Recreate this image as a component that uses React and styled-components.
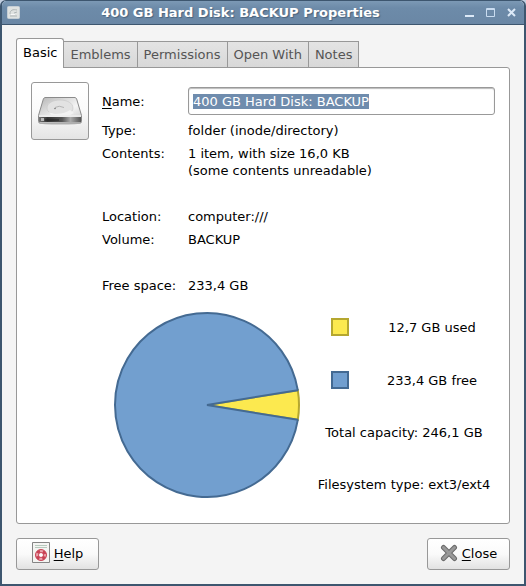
import React, { useEffect, useRef } from 'react'
import styled, { createGlobalStyle } from 'styled-components'

const theme = {
    frame: '#3d566f',
    title: '#6d8ba9',
    border: '#989898',
    selection: '#6f8cad',
    used: '#fce94f',
    usedBorder: '#b5a72f',
    free: '#729fcf',
    freeBorder: '#446a92',
}

const tabs = ['Basic', 'Emblems', 'Permissions', 'Open With', 'Notes']

const disk = { used: 12.7, free: 233.4 }

const DriveIcon = () => (
    <svg width="46" height="32" viewBox="0 0 46 32" aria-hidden="true">
        <defs>
            <linearGradient id="driveTop" x1="0" y1="0" x2="1" y2="1">
                <stop offset="0" stopColor="#b4b4b4" />
                <stop offset="0.3" stopColor="#d6d6d6" />
                <stop offset="0.6" stopColor="#f4f4f4" />
                <stop offset="1" stopColor="#c4c4c4" />
            </linearGradient>
            <linearGradient id="driveFront" x1="0" y1="0" x2="1" y2="0">
                <stop offset="0" stopColor="#777" />
                <stop offset="0.2" stopColor="#333" />
                <stop offset="0.55" stopColor="#555" />
                <stop offset="0.75" stopColor="#aaa" />
                <stop offset="1" stopColor="#555" />
            </linearGradient>
        </defs>
        <ellipse cx="23" cy="28" rx="21" ry="2" fill="#d0d0d0" />
        <path d="M8 2.500h30l1.500 1 5 17v6q0 1.500-1.500 1.500h-40q-1.500 0-1.500-1.500v-6l5-17z" fill="url(#driveTop)" stroke="#8a8a8a" />
        <path d="M2 22h42v5H2z" fill="url(#driveFront)" />
        <path d="M2 21h42" stroke="#eee" strokeWidth="1.500" />
        <path d="M10 13c0-5 6-8 13-8s13 3 13 8-6 6.500-13 6.500S10 18 10 13z" fill="#e2e2e2" stroke="#c8c8c8" strokeWidth=".7" />
        <path d="M12 17c6 3 16 2 21-2l4 3-4 2H14z" fill="#f2f2f2" />
        <path d="M18 12.500q4-2.500 9 0" fill="none" stroke="#b4b4b4" />
        <circle cx="18" cy="13.500" r=".8" fill="#777" />
        <path d="M4 23h3v3H4z" fill="#b8b8b8" />
        <path d="M8 25h14" stroke="#222" />
    </svg>
)

const WindowIcon = () => (
    <svg width="13" height="13" viewBox="0 0 13 13" aria-hidden="true">
        <rect x=".5" y=".5" width="12" height="12" rx="1" fill="#dfe2e1" stroke="#c5ced5" />
        <path d="M3 8c0-4 3-5 7-4M3 10h7M7 7l3-1" fill="none" stroke="#aeb5b6" />
        <path d="M4 8.500h4" stroke="#f7f7f7" />
    </svg>
)

const HelpIcon = () => (
    <svg width="18" height="22" viewBox="0 0 18 22" aria-hidden="true">
        <path d="M.5.5h17v20H.5z" fill="#f4f4f2" stroke="#858585" />
        <path d="M3 3.500h12M3 5.500h12" stroke="#b7c9bd" />
        <circle cx="9" cy="13" r="4" fill="#fff" stroke="#e9a5ad" strokeWidth="3" />
        <circle cx="9" cy="13" r="5.500" fill="none" stroke="#c94355" />
        <circle cx="9" cy="13" r="2.500" fill="none" stroke="#c94355" />
        <circle cx="9" cy="13" r="4" fill="none" stroke="#c94355" strokeWidth="3" strokeDasharray="3.140" strokeDashoffset="-1.570" />
    </svg>
)

const CloseIcon = () => (
    <svg width="18" height="18" viewBox="0 0 18 18" aria-hidden="true">
        <path d="M3.500 3.500l11 11M14.500 3.500l-11 11" stroke="#6a6a6a" strokeWidth="5" strokeLinecap="round" />
        <path d="M3.500 3.500l11 11M14.500 3.500l-11 11" stroke="#999" strokeWidth="3" strokeLinecap="round" />
    </svg>
)

const MinimizeIcon = () => (
    <svg width="11" height="11" viewBox="0 0 11 11" aria-hidden="true">
        <path d="M1 9h9" stroke="#dce9f7" strokeWidth="2" />
    </svg>
)

const MaximizeIcon = () => (
    <svg width="11" height="11" viewBox="0 0 11 11" aria-hidden="true">
        <path d="M1.500 1.500h8v8h-8zM1 2.500h9" fill="none" stroke="#c9dcf0" />
    </svg>
)

const CloseWindowIcon = () => (
    <svg width="11" height="11" viewBox="0 0 11 11" aria-hidden="true">
        <path d="M2 2l7 7M9 2l-7 7" stroke="#dce9f7" strokeWidth="2" />
    </svg>
)

// the used slice is centred on the right side of the pie
const PieChart = ({ used, free }) => {
    const r = 92
    const c = 94
    const angle = (used / (used + free)) * Math.PI
    const x = c + r * Math.cos(angle)
    const top = c - r * Math.sin(angle)
    const bottom = c + r * Math.sin(angle)

    return (
        <Pie viewBox="0 0 188 188" role="img" aria-label="Disk usage">
            <path d={`M${c} ${c}L${x} ${top}A${r} ${r} 0 0 1 ${x} ${bottom}Z`} fill={theme.used} stroke={theme.usedBorder} strokeWidth="2" />
            <path d={`M${c} ${c}L${x} ${bottom}A${r} ${r} 0 1 1 ${x} ${top}Z`} fill={theme.free} stroke={theme.freeBorder} strokeWidth="2" strokeLinejoin="bevel" />
        </Pie>
    )
}

const App = () => {
    const nameInput = useRef(null)

    useEffect(() => {
        nameInput.current.focus()
        nameInput.current.select()
    }, [])

    return (
        <>
            <GlobalStyle />
            <Window>
                <TitleBar>
                    <WindowIcon />
                    <Title>400 GB Hard Disk: BACKUP Properties</Title>
                    <WindowButton aria-label="Minimize"><MinimizeIcon /></WindowButton>
                    <WindowButton aria-label="Maximize"><MaximizeIcon /></WindowButton>
                    <WindowButton aria-label="Close window"><CloseWindowIcon /></WindowButton>
                </TitleBar>

                <Content>
                    <TabList role="tablist">
                        {tabs.map((tab, key) => (
                            <Tab key={tab} role="tab" aria-selected={key === 0} $active={key === 0}>{tab}</Tab>
                        ))}
                    </TabList>

                    <Panel role="tabpanel">
                        <IconButton aria-label="Change icon"><DriveIcon /></IconButton>
                        <Details>
                            <NameRow>
                                <label htmlFor="name"><u>N</u>ame:</label>
                                <NameInput id="name" ref={nameInput} defaultValue="400 GB Hard Disk: BACKUP" spellCheck="false" />
                            </NameRow>
                            <Properties>
                                <Property><dt>Type:</dt><dd>folder (inode/directory)</dd></Property>
                                <Property $last><dt>Contents:</dt><dd>1 item, with size 16,0 KB<br />(some contents unreadable)</dd></Property>
                                <Property><dt>Location:</dt><dd>computer:///</dd></Property>
                                <Property $last><dt>Volume:</dt><dd>BACKUP</dd></Property>
                                <Property><dt>Free space:</dt><dd>233,4 GB</dd></Property>
                            </Properties>
                            <Usage>
                                <PieChart used={disk.used} free={disk.free} />
                                <Legend>
                                    <LegendItem>
                                        <Swatch $fill={theme.used} $border={theme.usedBorder} />
                                        <LegendText>12,7 GB used</LegendText>
                                    </LegendItem>
                                    <LegendItem>
                                        <Swatch $fill={theme.free} $border={theme.freeBorder} />
                                        <LegendText>233,4 GB free</LegendText>
                                    </LegendItem>
                                    <LegendLine>Total capacity: 246,1 GB</LegendLine>
                                    <LegendLine>Filesystem type: ext3/ext4</LegendLine>
                                </Legend>
                            </Usage>
                        </Details>
                    </Panel>

                    <Actions>
                        <ActionButton><HelpIcon /><span><u>H</u>elp</span></ActionButton>
                        <ActionButton><CloseIcon /><span><u>C</u>lose</span></ActionButton>
                    </Actions>
                </Content>
            </Window>
        </>
    )
}

const GlobalStyle = createGlobalStyle`
    * {
        box-sizing: border-box;
    }

    body {
        margin: 0;
        background: #c3cfe0;
        color: #000;
        font: 13px/17px "DejaVu Sans", sans-serif;
    }

    button, input {
        font: inherit;
        color: inherit;
    }

    u {
        text-underline-offset: 2px;
    }
`

const Window = styled.main`
    display: flex;
    flex-direction: column;
    min-height: 100vh;
    border: 2px solid ${theme.frame};
    border-top-width: 1px;
    border-radius: 6px 6px 0 0;
    background: #f4f4f4;
    overflow: hidden;
`

const TitleBar = styled.header`
    display: flex;
    align-items: center;
    gap: 4px;
    height: 24px;
    padding: 0 4px 0 5px;
    border-bottom: 1px solid ${theme.frame};
    background: linear-gradient(#7c99b5, ${theme.title} 30%, #6a87a5);
`

const Title = styled.h1`
    flex: 1;
    margin: 0;
    color: white;
    font-size: 13px;
    text-align: center;
    text-shadow: 1px 1px 1px #49637d;
`

const WindowButton = styled.button`
    display: flex;
    align-items: center;
    justify-content: center;
    width: 17px;
    height: 17px;
    padding: 0;
    border: 0;
    background: none;
`

const Content = styled.div`
    display: flex;
    flex: 1;
    flex-direction: column;
    padding: 13px 14px 14px;
`

const TabList = styled.div`
    display: flex;
    align-items: flex-end;
`

const Tab = styled.button`
    height: ${({ $active }) => ($active ? 30 : 26)}px;
    margin-bottom: ${({ $active }) => ($active ? -1 : 0)}px;
    margin-right: -1px;
    padding: ${({ $active }) => ($active ? '0 6px 2px' : '0 6px')};
    border: 1px solid ${theme.border};
    border-bottom: 0;
    border-radius: ${({ $active }) => ($active ? '3px 3px 0 0' : 0)};
    background: ${({ $active }) => ($active ? 'white' : 'linear-gradient(#e4e4e4, #d8d8d8)')};
    color: ${({ $active }) => ($active ? '#000' : '#555')};
    z-index: ${({ $active }) => ($active ? 1 : 0)};
`

const Panel = styled.section`
    display: flex;
    flex: 1;
    align-items: flex-start;
    gap: 13px;
    padding: 14px;
    border: 1px solid ${theme.border};
    border-radius: 0 3px 3px 3px;
    background: white;
`

const IconButton = styled.button`
    display: flex;
    align-items: center;
    justify-content: center;
    width: 58px;
    height: 58px;
    padding: 0;
    border: 1px solid ${theme.border};
    border-radius: 3px;
    background: linear-gradient(#fff, #fafafa 50%, #e4e4e4);
`

const Details = styled.div`
    flex: 1;
    padding-top: 5px;
`

const NameRow = styled.div`
    display: grid;
    grid-template-columns: 86px 1fr;
    align-items: center;
`

const NameInput = styled.input`
    width: 100%;
    height: 28px;
    padding: 0 4px;
    border: 1px solid #999;
    border-radius: 3px;
    outline: 0;
    background: white;
    box-shadow: inset 0 1px 1px #bbb;

    &::selection {
        background: ${theme.selection};
        color: white;
    }
`

const Properties = styled.dl`
    margin: 7px 0 0;
`

const Property = styled.div`
    display: grid;
    grid-template-columns: 86px 1fr;
    margin-bottom: ${({ $last }) => ($last ? 29 : 6)}px;

    dd {
        margin: 0;
    }
`

const Usage = styled.div`
    display: flex;
    align-items: flex-start;
    gap: 14px;
    margin-top: 17px;
    padding-left: 11px;
`

const Pie = styled.svg`
    flex: none;
    width: 188px;
    height: 188px;
`

const Legend = styled.div`
    display: flex;
    flex: 1;
    flex-direction: column;
    gap: 35px;
    padding-top: 7px;
`

const LegendItem = styled.div`
    display: flex;
    align-items: center;
    height: 18px;
    padding: 0 16px;
`

const Swatch = styled.span`
    width: 18px;
    height: 18px;
    border: 2px solid ${({ $border }) => $border};
    background: ${({ $fill }) => $fill};
`

const LegendText = styled.span`
    flex: 1;
    padding-left: 36px;
    text-align: center;
`

const LegendLine = styled.div`
    padding-right: 2px;
    text-align: center;
    white-space: nowrap;
`

const Actions = styled.footer`
    display: flex;
    justify-content: space-between;
    margin-top: 14px;
`

const ActionButton = styled.button`
    display: flex;
    align-items: center;
    justify-content: center;
    gap: 4px;
    width: 83px;
    height: 32px;
    padding: 0 0 2px;
    border: 1px solid ${theme.border};
    border-radius: 3px;
    background: linear-gradient(#fff, #fafafa 50%, #e2e2e2);
`

export default App
